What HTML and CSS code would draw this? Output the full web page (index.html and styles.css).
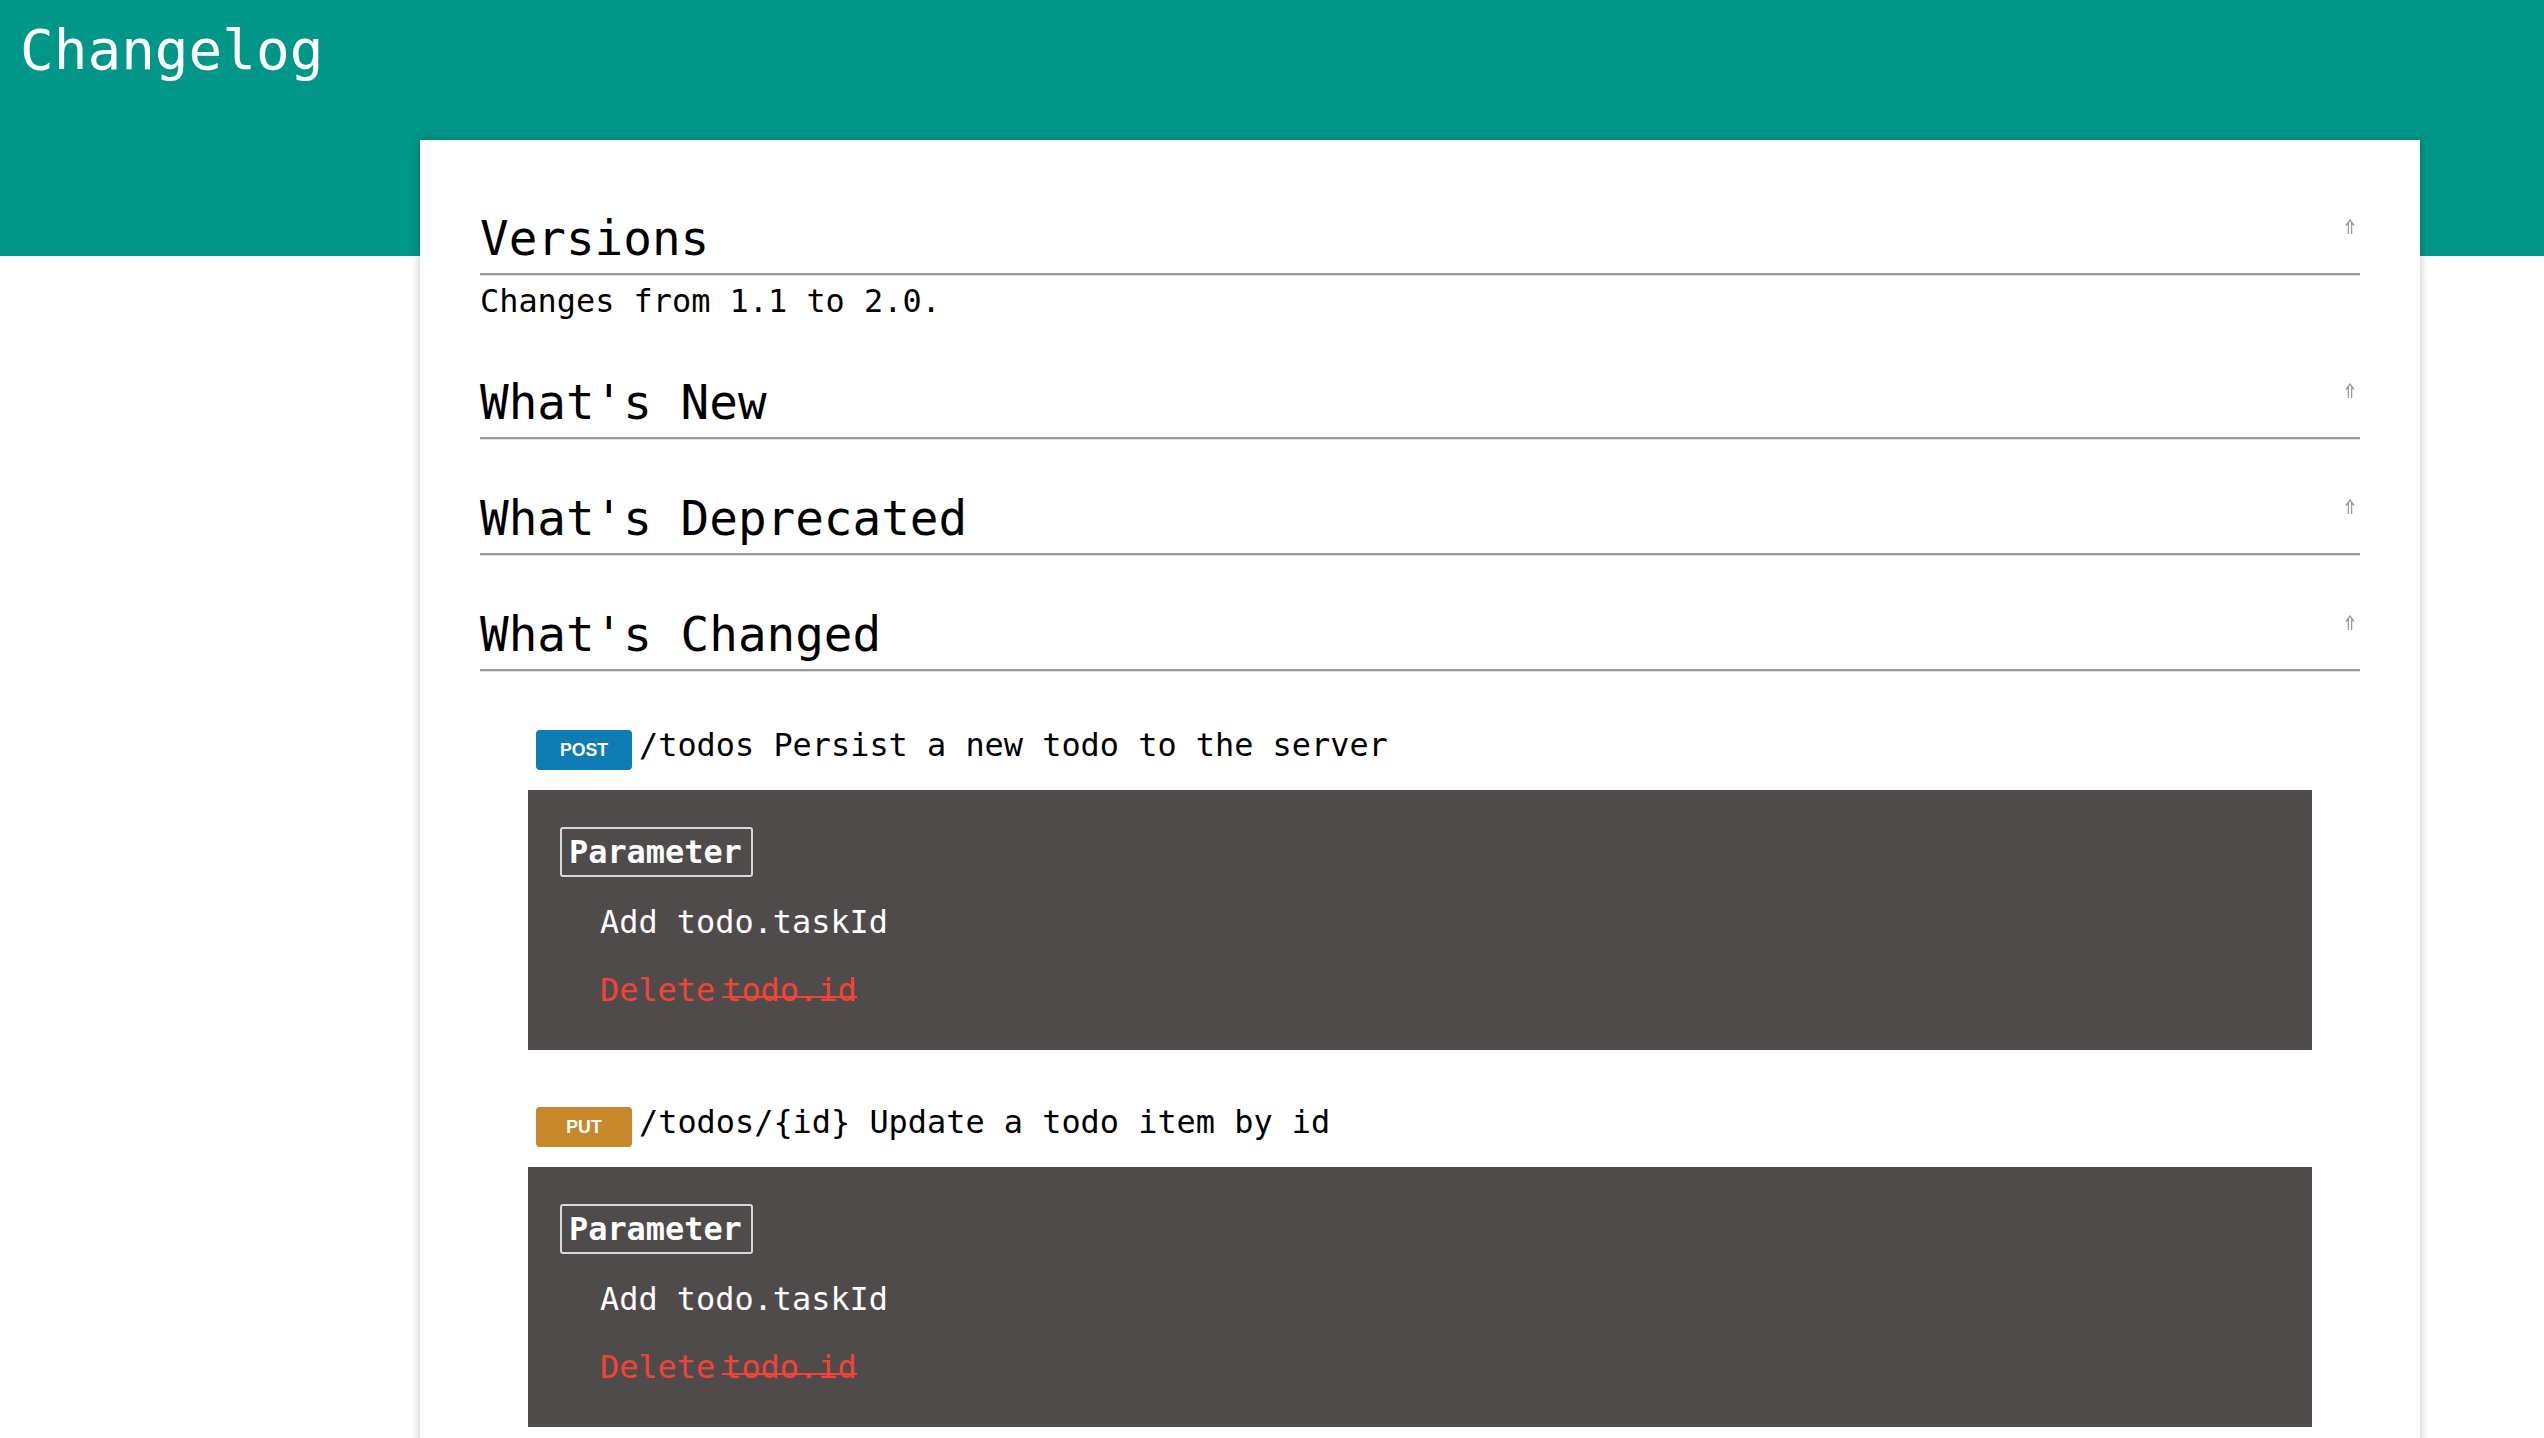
FILE: index.html
```html
<!DOCTYPE html>
<html lang="en">
<head>
<meta charset="utf-8">
<title>Changelog</title>
<link rel="stylesheet" href="styles.css">
</head>
<body>
<header class="topbar"><h1 class="title">Changelog</h1></header>
<main class="card">
  <section class="sec">
    <h2 class="sec-title">Versions<a class="top-link" href="#" aria-label="top"><svg width="10" height="15" viewBox="0 0 10 15"><path d="M1 6.5 L5 1 L9 6.5 M3.4 4 V15 M6.6 4 V15" fill="none" stroke="#9a9a9a" stroke-width="1.3"/></svg></a></h2>
    <p class="intro">Changes from 1.1 to 2.0.</p>
  </section>
  <section class="sec">
    <h2 class="sec-title">What's New<a class="top-link" href="#" aria-label="top"><svg width="10" height="15" viewBox="0 0 10 15"><path d="M1 6.5 L5 1 L9 6.5 M3.4 4 V15 M6.6 4 V15" fill="none" stroke="#9a9a9a" stroke-width="1.3"/></svg></a></h2>
  </section>
  <section class="sec">
    <h2 class="sec-title">What's Deprecated<a class="top-link" href="#" aria-label="top"><svg width="10" height="15" viewBox="0 0 10 15"><path d="M1 6.5 L5 1 L9 6.5 M3.4 4 V15 M6.6 4 V15" fill="none" stroke="#9a9a9a" stroke-width="1.3"/></svg></a></h2>
  </section>
  <section class="sec">
    <h2 class="sec-title">What's Changed<a class="top-link" href="#" aria-label="top"><svg width="10" height="15" viewBox="0 0 10 15"><path d="M1 6.5 L5 1 L9 6.5 M3.4 4 V15 M6.6 4 V15" fill="none" stroke="#9a9a9a" stroke-width="1.3"/></svg></a></h2>
    <div class="endpoint">
      <div class="ep-head"><span class="badge post">POST</span>/todos Persist a new todo to the server</div>
      <div class="ep-body">
        <div class="param-label">Parameter</div>
        <ul class="changes">
          <li class="add">Add todo.taskId</li>
          <li class="del">Delete<span class="strike">todo.id</span></li>
        </ul>
      </div>
    </div>
    <div class="endpoint">
      <div class="ep-head"><span class="badge put">PUT</span>/todos/{id} Update a todo item by id</div>
      <div class="ep-body">
        <div class="param-label">Parameter</div>
        <ul class="changes">
          <li class="add">Add todo.taskId</li>
          <li class="del">Delete<span class="strike">todo.id</span></li>
        </ul>
      </div>
    </div>
  </section>
</main>
</body>
</html>
```
FILE: styles.css
```css
body {
  margin: 0;
  background: #ffffff;
  color: #000000;
  font-family: "DejaVu Sans Mono", "Liberation Mono", monospace;
}

.topbar {
  background: #009688;
  height: 256px;
  box-sizing: border-box;
  padding: 17px 0 0 20px;
}

.title {
  margin: 0;
  font-size: 56px;
  line-height: 65px;
  font-weight: normal;
  color: #ffffff;
}

.card {
  position: relative;
  margin: -116px 0 0 420px;
  width: 2000px;
  box-sizing: border-box;
  background: #ffffff;
  box-shadow: 0 1px 10px rgba(0, 0, 0, 0.22);
  padding: 71px 60px 60px;
}

.sec-title {
  margin: 52px 0 0;
  font-size: 47.6px;
  line-height: 56px;
  font-weight: normal;
  padding-bottom: 6px;
  border-bottom: 2px solid #9a9a9a;
  box-shadow: 0 1px 0 #dddddd;
}

.sec:first-child .sec-title {
  margin-top: 0;
}

.top-link {
  float: right;
  display: block;
  margin: 8px 5px 0 0;
  line-height: 0;
}

.top-link svg {
  display: block;
}

.intro {
  margin: 7.5px 0 0;
  padding-bottom: 3px;
  font-size: 31.9px;
  line-height: 37px;
}

.endpoint {
  margin: 56px 48px 0;
}

.endpoint + .endpoint {
  margin-top: 54px;
}

.ep-head {
  padding-left: 8px;
  font-size: 31.9px;
  line-height: 37px;
}

.badge {
  display: inline-block;
  width: 96px;
  height: 40px;
  margin-right: 7px;
  border-radius: 4px;
  color: #ffffff;
  text-align: center;
  font-family: "Liberation Sans Narrow", "Liberation Sans", sans-serif;
  font-weight: bold;
  font-size: 17.7px;
  line-height: 40px;
  vertical-align: baseline;
}

.badge.post {
  background: #0f7cb3;
}

.badge.put {
  background: #c7882b;
}

.ep-body {
  margin-top: 20px;
  background: #504b4b;
  color: #ffffff;
  padding: 37px 32px 40.5px;
}

.param-label {
  width: fit-content;
  border: 2px solid #d8d8d8;
  border-radius: 3px;
  padding: 5px 9px 4px 7px;
  font-weight: bold;
  font-size: 31.9px;
  line-height: 37px;
}

.changes {
  list-style: none;
  margin: 27.5px 0 0;
  padding: 0 0 0 40px;
  font-size: 31.9px;
  line-height: 37px;
}

.changes li + li {
  margin-top: 31px;
}

.del {
  color: #f44336;
}

.strike {
  margin-left: 7px;
  background: linear-gradient(currentColor, currentColor) 0 25px / 100% 2px no-repeat;
}
```
